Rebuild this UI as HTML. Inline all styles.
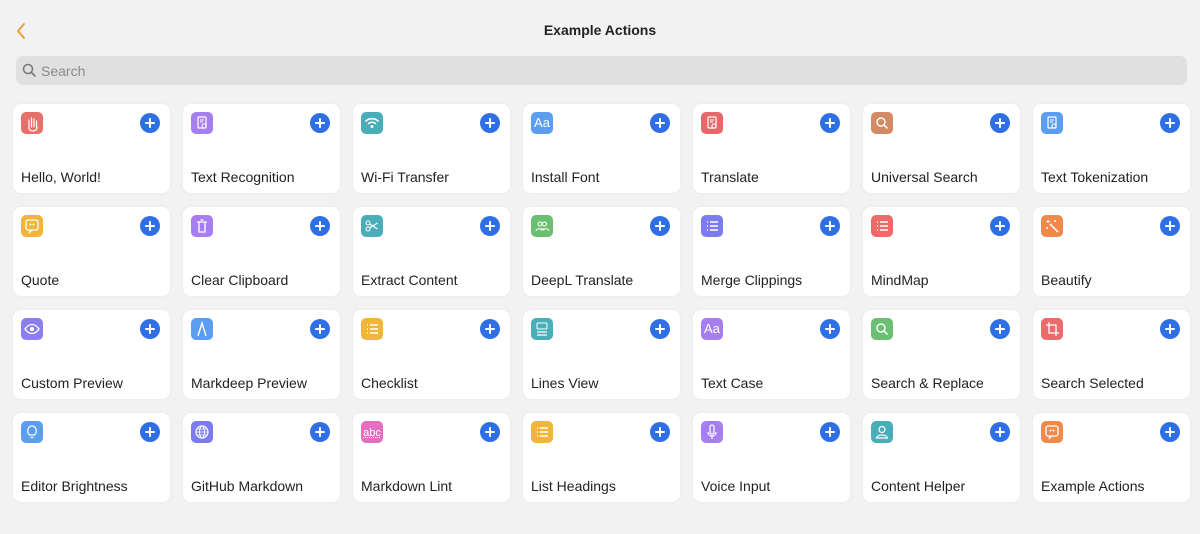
<!DOCTYPE html>
<html><head><meta charset="utf-8"><style>
*{margin:0;padding:0;box-sizing:border-box}
body{width:1200px;height:534px;background:#f2f2f2;font-family:"Liberation Sans",sans-serif;position:relative;overflow:hidden}
.title{position:absolute;top:22px;left:0;width:1200px;text-align:center;font-size:14px;font-weight:bold;color:#222}
.back{position:absolute;left:15px;top:22px}
.search{position:absolute;left:16px;top:56px;width:1171px;height:29px;background:#e0e0e0;border-radius:7px}
.search span{position:absolute;left:25px;top:7px;font-size:14px;color:#8a8a8a}
.card{position:absolute;width:157px;height:89px;background:#fff;border-radius:8px;box-shadow:0 0 3px rgba(0,0,0,.05)}
.ic{position:absolute;left:8px;top:8px;width:22px;height:22px;border-radius:5px;color:#fff;font-size:13px;text-align:center;line-height:22px}
.ic svg{position:absolute;left:0;top:0}
.plus{position:absolute;left:127px;top:9px;width:20px;height:20px;border-radius:50%;background:#2f6fe6}
.plus:before{content:"";position:absolute;left:5px;top:9px;width:10px;height:2px;background:#fff;border-radius:1px}
.plus:after{content:"";position:absolute;left:9px;top:5px;width:2px;height:10px;background:#fff;border-radius:1px}
.lb{position:absolute;left:8px;top:65px;font-size:14px;color:#222;white-space:nowrap}
</style></head><body>
<svg class="back" width="12" height="18" viewBox="0 0 12 18"><path d="M9 2 L3 9 L9 16" fill="none" stroke="#ef9a2c" stroke-width="1.8" stroke-linecap="round" stroke-linejoin="round"/></svg>
<div class="title">Example Actions</div>
<div class="search"><svg style="position:absolute;left:6px;top:7px" width="14" height="14" viewBox="0 0 14 14"><circle cx="6" cy="6" r="4.5" fill="none" stroke="#777" stroke-width="1.5"/><path d="M9.5 9.5 L13 13" stroke="#777" stroke-width="1.6" stroke-linecap="round"/></svg><span>Search</span></div>
<div id="g"></div>
<script>
var d=[
["Hello, World!","#e8706b","hand"],["Text Recognition","#a77ef0","doc"],["Wi-Fi Transfer","#4aaeb8","wifi"],["Install Font","#5b9ef0","Aa"],["Translate","#e8676a","doc"],["Universal Search","#d48a62","mag"],["Text Tokenization","#5b9ef0","doc"],
["Quote","#f2b53c","quote"],["Clear Clipboard","#a77ef0","trash"],["Extract Content","#4aaeb8","sc"],["DeepL Translate","#6bbf73","ppl"],["Merge Clippings","#7c7cf0","list"],["MindMap","#ec6a6a","list"],["Beautify","#f08a4b","wand"],
["Custom Preview","#8a7ef0","eye"],["Markdeep Preview","#5b9ef0","comp"],["Checklist","#f2b53c","list"],["Lines View","#4aaeb8","lines"],["Text Case","#a77ef0","Aa"],["Search & Replace","#6bbf73","mag"],["Search Selected","#ec6a6a","crop"],
["Editor Brightness","#5b9ef0","bulb"],["GitHub Markdown","#7c7cf0","globe"],["Markdown Lint","#e46fc0","abc"],["List Headings","#f2b53c","list"],["Voice Input","#a77ef0","mic"],["Content Helper","#4aaeb8","person"],["Example Actions","#f08a4b","quote"]];
var P={
hand:'<path d="M8 16V8M10.5 15V6M13 15V7M15.5 15V9M8 16c0 2 2 3 4 3s4-1 4-4" stroke="#fff" stroke-width="1.2" fill="none" stroke-linecap="round"/>',
doc:'<rect x="7" y="5" width="8" height="11" rx="1" stroke="#fff" stroke-width="1.2" fill="none"/><path d="M9 8h4M9 10h3" stroke="#fff" stroke-width="1"/><circle cx="13" cy="14" r="2" stroke="#fff" fill="none"/>',
wifi:'<path d="M5 9a9 9 0 0 1 12 0M7.5 11.5a5.5 5.5 0 0 1 7 0" stroke="#fff" stroke-width="1.6" fill="none" stroke-linecap="round"/><circle cx="11" cy="14.5" r="1.5" fill="#fff"/>',
mag:'<circle cx="10" cy="10" r="4" stroke="#fff" stroke-width="1.4" fill="none"/><path d="M13 13l3.5 3.5" stroke="#fff" stroke-width="1.5"/>',
quote:'<rect x="5" y="5" width="12" height="10" rx="2" stroke="#fff" stroke-width="1.3" fill="none"/><path d="M9 15l-1 3 3-3" stroke="#fff" fill="none"/><circle cx="9.5" cy="9.5" r="1" fill="#fff"/><circle cx="12.5" cy="9.5" r="1" fill="#fff"/>',
trash:'<path d="M6 7h10M8 7v10h6V7M9.5 5h3" stroke="#fff" stroke-width="1.3" fill="none"/>',
sc:'<circle cx="7" cy="8" r="2" stroke="#fff" fill="none"/><circle cx="7" cy="14" r="2" stroke="#fff" fill="none"/><path d="M8.5 9l8 5M8.5 13l8-5" stroke="#fff" stroke-width="1.2"/>',
ppl:'<circle cx="9" cy="9" r="2" stroke="#fff" fill="none"/><circle cx="13.5" cy="9" r="2" stroke="#fff" fill="none"/><path d="M5 16c0-3 8-3 8 0M10 16c0-3 8-3 8 0" stroke="#fff" fill="none"/>',
list:'<path d="M6 7h1M6 11h1M6 15h1M9 7h8M9 11h8M9 15h8" stroke="#fff" stroke-width="1.4"/>',
wand:'<path d="M9 9l8 8" stroke="#fff" stroke-width="1.5"/><path d="M7 5v3M5.5 6.5h3M14 5v2M13 6h2M6 12v2M5 13h2" stroke="#fff"/>',
eye:'<path d="M4 11c4-6 10-6 14 0c-4 6-10 6-14 0z" stroke="#fff" stroke-width="1.3" fill="none"/><circle cx="11" cy="11" r="2" fill="#fff"/>',
comp:'<path d="M7 18l4-13 4 13" stroke="#fff" stroke-width="1.4" fill="none"/>',
lines:'<rect x="6" y="5" width="10" height="6" rx="1" stroke="#fff" fill="none"/><path d="M6 14h10M6 17h10" stroke="#fff" stroke-width="1.3"/>',
crop:'<path d="M8 4v11h10M5 7h10v11" stroke="#fff" stroke-width="1.3" fill="none"/>',
bulb:'<path d="M8.5 14c-3-3-2-9 2.5-9s5.5 6 2.5 9zM9.5 16.5h3" stroke="#fff" stroke-width="1.2" fill="none"/>',
globe:'<circle cx="11" cy="11" r="6" stroke="#fff" stroke-width="1.2" fill="none"/><ellipse cx="11" cy="11" rx="2.5" ry="6" stroke="#fff" fill="none"/><path d="M5 11h12M6 8h10M6 14h10" stroke="#fff" stroke-width=".8"/>',
mic:'<rect x="9" y="4" width="4" height="9" rx="2" stroke="#fff" stroke-width="1.2" fill="none"/><path d="M7 11a4 4 0 0 0 8 0M11 15v3" stroke="#fff" stroke-width="1.2" fill="none"/>',
person:'<circle cx="11" cy="8.5" r="3" stroke="#fff" stroke-width="1.2" fill="none"/><path d="M5.5 17c1-4 10-4 11 0z" stroke="#fff" stroke-width="1.2" fill="none"/>'};
var h='';
d.forEach(function(c,i){var x=13+(i%7)*170,y=104+Math.floor(i/7)*103;
var inner=P[c[2]]?'<svg width="22" height="22" viewBox="0 0 22 22">'+P[c[2]]+'</svg>':(c[2]=='abc'?'<span style="font-size:11px;text-decoration:underline dotted">abc</span>':c[2]);
h+='<div class="card" style="left:'+x+'px;top:'+y+'px"><div class="ic" style="background:'+c[1]+'">'+inner+'</div><div class="plus"></div><div class="lb">'+c[0].replace('&','&amp;')+'</div></div>';});
document.getElementById('g').innerHTML=h;
</script>
</body></html>
